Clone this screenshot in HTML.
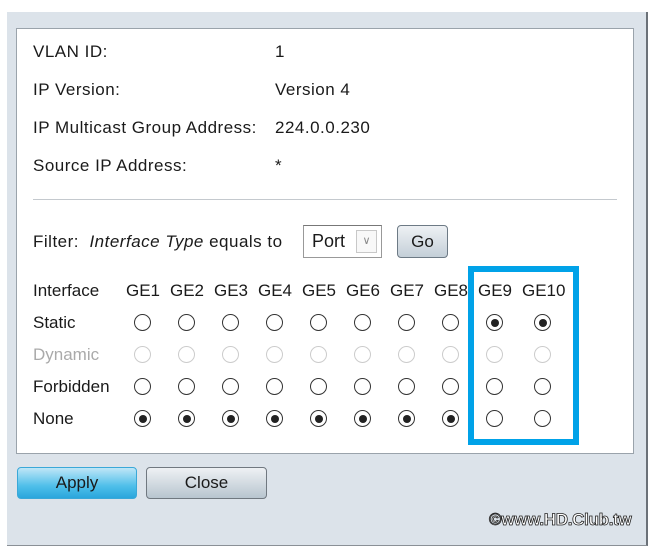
<!DOCTYPE html>
<html><head><style>
body{margin:0;width:656px;height:555px;background:#fff;position:relative;overflow:hidden;font-family:"Liberation Sans",Arial,sans-serif;font-size:17px;color:#1a1a1a}
.a{position:absolute;white-space:nowrap}
.t{letter-spacing:0.5px}
.panel{position:absolute;left:7px;top:12px;width:639px;height:533px;background:#dce3ea;border-right:2px solid #6b7178;border-bottom:1px solid #8a9096}
.inner{position:absolute;left:16px;top:28px;width:616px;height:424px;background:#fff;border:1px solid #9aa3ab}
.r{position:absolute;width:15px;height:15px;border:1.5px solid #333;border-radius:50%;background:#fff;box-sizing:content-box}
.r.d{border-color:#ccc}
.r.c::after{content:"";position:absolute;left:3.5px;top:3.5px;width:8px;height:8px;border-radius:50%;background:#222}
.btn{position:absolute;border-radius:4px;text-align:center;font-size:17px;line-height:29px}
</style></head><body>
<div class="panel"></div>
<div class="inner"></div>
<div class="a t" style="left:33px;top:42px">VLAN ID:</div><div class="a t" style="left:275px;top:42px">1</div>
<div class="a t" style="left:33px;top:80px">IP Version:</div><div class="a t" style="left:275px;top:80px">Version 4</div>
<div class="a t" style="left:33px;top:118px">IP Multicast Group Address:</div><div class="a t" style="left:275px;top:118px">224.0.0.230</div>
<div class="a t" style="left:33px;top:156px">Source IP Address:</div><div class="a t" style="left:275px;top:156px">*</div>
<div class="a" style="left:33px;top:199px;width:584px;height:1px;background:#c4c9ce"></div>
<div class="a t" style="left:33px;top:232px">Filter:&nbsp; <i>Interface Type</i> equals to</div>
<div class="a" style="left:303px;top:225px;width:77px;height:31px;border:1px solid #999;border-top-color:#777;background:#fff"></div>
<div class="a" style="left:312px;top:231px;font-size:18px">Port</div>
<div class="a" style="left:356px;top:230px;width:19px;height:21px;border:1px solid #c8c8c8;background:#f8f8f8;text-align:center;color:#888;font-size:11px;line-height:21px">&#8744;</div>
<div class="btn" style="left:397px;top:225px;width:49px;height:31px;border:1px solid #6d7a85;background:linear-gradient(#eef1f4,#c4cfd8);line-height:31px">Go</div>
<div class="a" style="left:33px;top:281px">Interface</div>
<div class="a" style="left:33px;top:313px">Static</div>
<div class="a" style="left:33px;top:345px;color:#aaa">Dynamic</div>
<div class="a" style="left:33px;top:377px">Forbidden</div>
<div class="a" style="left:33px;top:409px">None</div>
<div class="a" style="left:126px;top:281px">GE1</div><div class="a" style="left:170px;top:281px">GE2</div><div class="a" style="left:214px;top:281px">GE3</div><div class="a" style="left:258px;top:281px">GE4</div><div class="a" style="left:302px;top:281px">GE5</div><div class="a" style="left:346px;top:281px">GE6</div><div class="a" style="left:390px;top:281px">GE7</div><div class="a" style="left:434px;top:281px;width:34px;overflow:hidden">GE8</div><div class="a" style="left:478px;top:281px">GE9</div><div class="a" style="left:522px;top:281px">GE10</div>
<div id="g"></div>
<div class="a" style="left:468px;top:266px;width:99px;height:167px;border:6px solid #00a2e8"></div>
<div class="btn" style="left:17px;top:467px;width:118px;height:30px;border:1px solid #3aa8d8;background:linear-gradient(#bfe6f7,#4fbfea 60%,#2aa6dc)">Apply</div>
<div class="btn" style="left:146px;top:467px;width:119px;height:30px;border:1px solid #707880;background:linear-gradient(#eef1f4,#b8c5cf)">Close</div>
<div class="a" style="left:489px;top:510px;font-size:17px;font-weight:bold;color:#fff;-webkit-text-stroke:0.8px #222;letter-spacing:-0.3px">©www.HD.Club.tw</div>
<script>
var xs=[143,187,231,275,319,363,407,451,495,543],ys=[323,355,387,419],h="";
for(var j=0;j<4;j++)for(var i=0;i<10;i++){var c="r";if(j==1)c+=" d";if(j==0&&i>=8)c+=" c";if(j==3&&i<8)c+=" c";h+='<div class="'+c+'" style="left:'+(xs[i]-9)+'px;top:'+(ys[j]-9)+'px"></div>';}
document.getElementById("g").innerHTML=h;
</script>
</body></html>
